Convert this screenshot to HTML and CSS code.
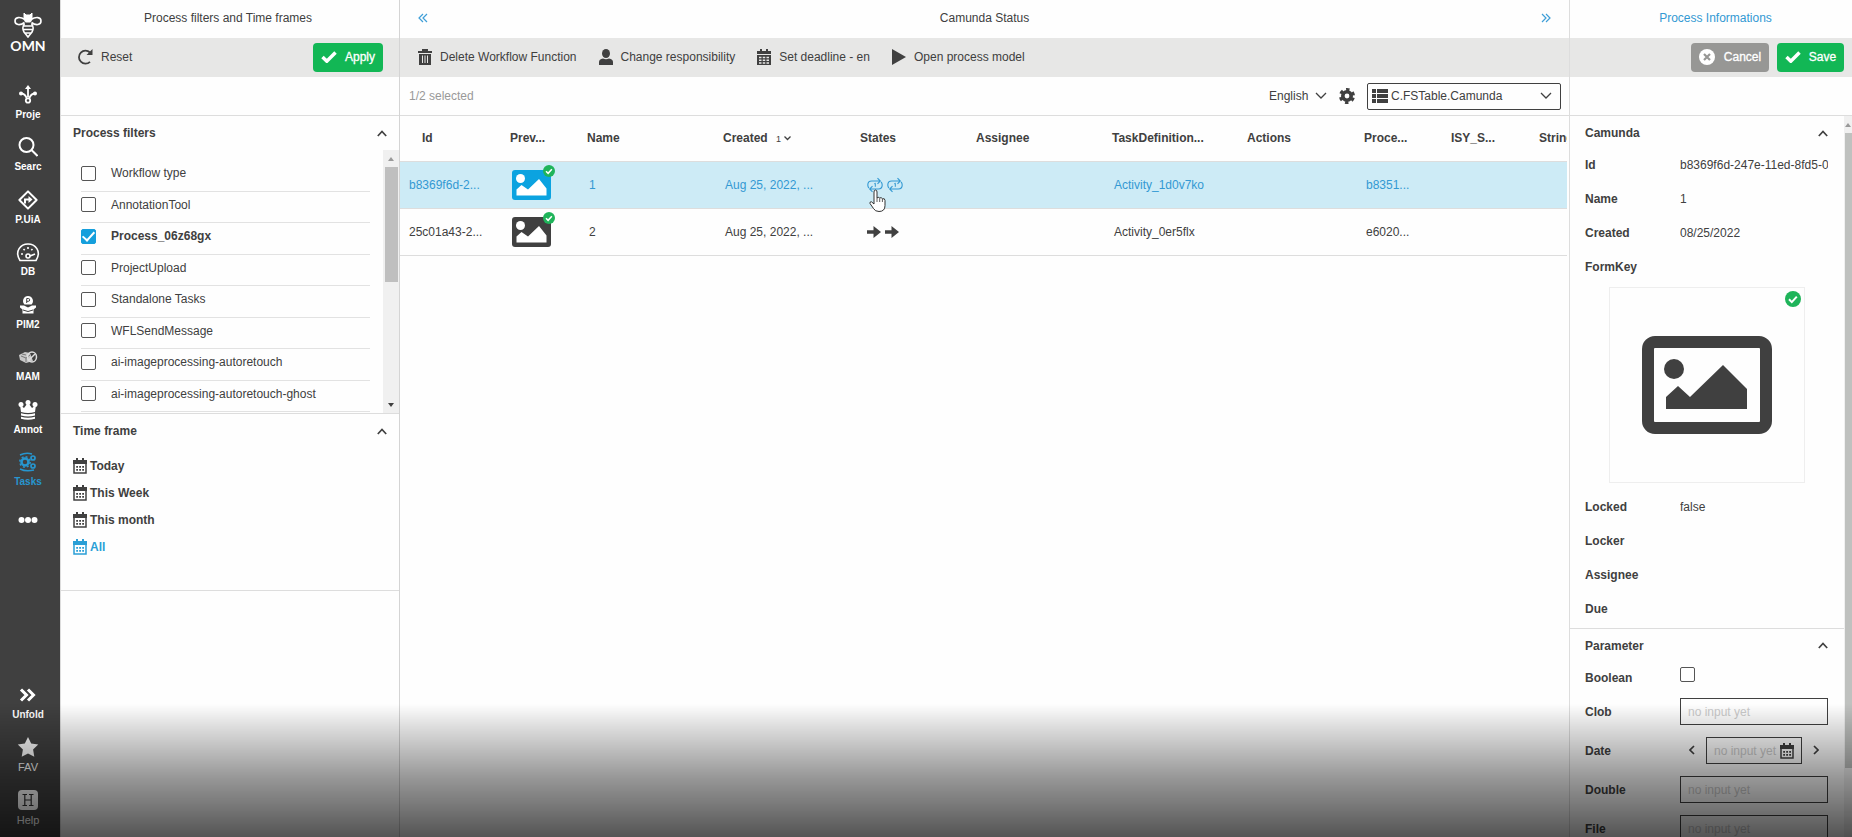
FILE: index.html
```html
<!DOCTYPE html>
<html lang="en">
<head>
    <meta charset="UTF-8">
    <meta name="viewport" content="width=device-width, initial-scale=1.0">
    <title>OMN - Camunda Status</title>
    <link rel="stylesheet" href="styles.css">
</head>
<body>
    <!-- shared icons -->
    <svg class="sprite" aria-hidden="true">
        <symbol id="check" viewBox="0 0 16 12"><path d="M1.500 6l4.300 4.200L14.500 1.500" fill="none" stroke="currentColor" stroke-width="3.500"/></symbol>
        <symbol id="up" viewBox="0 0 10 7"><path d="M.8 6L5 1.500 9.200 6" fill="none" stroke="currentColor" stroke-width="1.700"/></symbol>
        <symbol id="calendar" viewBox="0 0 14 16">
            <path d="M1 3h12v12H1z" fill="none" stroke="currentColor" stroke-width="1.500"/>
            <path d="M0 2h14v4H0zM3 0h2v3H3zM9 0h2v3H9z" fill="currentColor"/>
            <path d="M3.200 8.800h7.800M3.200 11.800h7.800" stroke="currentColor" stroke-width="1.800" stroke-dasharray="1.800 1.200"/>
        </symbol>
        <symbol id="badge" viewBox="0 0 16 16"><circle cx="8" cy="8" r="8" fill="#1fb45a"/><path d="M4 8.300l2.800 2.800 5-5.500" fill="none" stroke="#fff" stroke-width="2"/></symbol>
        <symbol id="image" viewBox="0 0 39 30">
            <rect width="39" height="30" rx="3" fill="currentColor"/>
            <circle cx="8.500" cy="8.500" r="4.500" fill="#fff"/>
            <path d="M4.500 25.500v-6l5-4.500 6.500 4.500L27 9l7.500 9.500v7z" fill="#fff"/>
        </symbol>
        <symbol id="loop" viewBox="0 0 16 16">
            <path d="M2 11Q.8 10 .8 8 .8 4 4.800 4H13M10.500 1.200L13.300 4l-2.800 2.800M14 5q1.200 1 1.200 3 0 4-4 4H3M5.500 9.200L2.700 12l2.800 2.800" fill="none" stroke="currentColor" stroke-width="1.100"/>
            <path d="M7.300 6.800l1-.6v3.600" fill="none" stroke="currentColor"/>
        </symbol>
        <symbol id="arrow" viewBox="0 0 14 12"><path d="M0 4.200h6.500V0L14 6l-7.500 6V7.800H0z" fill="currentColor"/></symbol>
    </svg>

    <div class="app">
        <nav class="sidebar">
            <div class="logo">
                <svg width="28" height="26" viewBox="0 0 28 26" fill="none" stroke="#fff" stroke-width="1.600">
                    <path d="M11 7.500C6 4.500 1 5 1 9s5 5 9.500 1.500M17 7.500C22 4.500 27 5 27 9s-5 5-9.500 1.500"/>
                    <path d="M10 1l2 2h4l2-2v6l-1.500 3h-5L10 7z" fill="#fff" stroke-width="1"/>
                    <path d="M9.500 14h9M9.500 17.500h9M11 21h6M10.500 11.500q-3 4-.5 8.500l4 5 4-5q2.500-4.500-.5-8.500"/>
                </svg>
                <span>OMN</span>
            </div>
            <ul class="menu">
                <li><a href="#">
                    <svg width="20" height="20" viewBox="0 0 20 20" fill="none" stroke="currentColor" stroke-width="1.800"><path d="M10 3v9M3 8.500c4 0 4.500 2.500 6 5M17 8.500c-4 0-4.500 2.500-6 5"/><circle cx="10" cy="15.500" r="2.200"/><path d="M10 0l3 4H7z" fill="currentColor" stroke="none"/><circle cx="3" cy="8.500" r="2" fill="currentColor" stroke="none"/><circle cx="17" cy="8.500" r="2" fill="currentColor" stroke="none"/></svg>
                    Proje</a></li>
                <li><a href="#">
                    <svg width="20" height="20" viewBox="0 0 20 20" fill="none" stroke="currentColor" stroke-width="2"><circle cx="8.500" cy="8" r="7"/><path d="M13.500 13l6 6"/></svg>
                    Searc</a></li>
                <li><a href="#">
                    <svg width="20" height="20" viewBox="0 0 20 20" fill="none" stroke="currentColor" stroke-width="2"><path d="M10 1.400L18.600 10 10 18.600 1.400 10z" stroke-linejoin="round"/><path d="M7 13.500V9.500h4"/><path d="M10.500 6l4 3.500-4 3.500z" fill="currentColor" stroke="none"/></svg>
                    P.UiA</a></li>
                <li><a href="#">
                    <svg width="24" height="20" viewBox="0 0 24 20" fill="none" stroke="currentColor" stroke-width="1.600"><path d="M4 18.500C-2 9 5 2 12 2s14 7 8 16.500zM14 14l5-2"/><circle cx="12" cy="14" r="2"/><path d="M5 12h2M7.500 7l1.200 1.200M12 5v2M16.500 7l-1.200 1.200"/></svg>
                    DB</a></li>
                <li><a href="#">
                    <svg width="20" height="20" viewBox="0 0 20 20" fill="currentColor"><path d="M10 1a5 5 0 0 1 3.500 8.500h-7A5 5 0 0 1 10 1zM2 10.500l4 0 4 2 4-2h4v2l-2.500 2v4h-11v-4L2 12.500z"/><path d="M8.700 8V3.500h1.600a1.400 1.400 0 0 1 0 2.800H9M5 15l5 1.500 5-1.500" fill="none" stroke="#404040" stroke-width="1"/></svg>
                    PIM2</a></li>
                <li><a href="#">
                    <svg width="20" height="20" viewBox="0 0 20 20"><path d="M1 8l6-3 5 1 3 8-7 2-6-3z" fill="#c8c8c8"/><path d="M3 9l5 2 4-3M8 11v4M4 7l4 1" stroke="#777" fill="none"/><ellipse cx="14" cy="10" rx="4.500" ry="5" fill="none" stroke="#ddd" stroke-width="1.500"/><path d="M11 13l6-6" stroke="#ddd" stroke-width="1.500"/></svg>
                    MAM</a></li>
                <li><a href="#">
                    <svg width="20" height="20" viewBox="0 0 20 20" fill="currentColor"><circle cx="10" cy="2.500" r="2.500"/><circle cx="3" cy="4.500" r="2.500"/><circle cx="17" cy="4.500" r="2.500"/><path d="M2 5l4 3 3-4h2l3 4 4-3-1 7q-7 2-14 0zM3 13.200q7 2 14 0v2.300q-7 2-14 0zM3 16.700q7 2 14 0v2q-7 2-14 0z"/></svg>
                    Annot</a></li>
                <li><a href="#" class="active">
                    <svg width="20" height="20" viewBox="0 0 20 20" fill="none" stroke="currentColor"><circle cx="7" cy="10" r="3.500" stroke-width="2.500"/><circle cx="7" cy="10" r="5.200" stroke-width="1.500" stroke-dasharray="2 2.080"/><circle cx="15" cy="6" r="2" stroke-width="1.700"/><circle cx="15" cy="14" r="2" stroke-width="1.700"/><path d="M2 3q6-3 12-1M2 17q6 3 14 1" stroke-width="1.500"/></svg>
                    Tasks</a></li>
                <li><a href="#" class="more" aria-label="More">
                    <svg width="20" height="20" viewBox="0 0 20 20" fill="currentColor"><circle cx="3.500" cy="10" r="3"/><circle cx="10" cy="10" r="3"/><circle cx="16.500" cy="10" r="3"/></svg></a></li>
            </ul>
            <ul class="menu menu-bottom">
                <li><a href="#">
                    <svg width="20" height="20" viewBox="0 0 20 20" fill="none" stroke="currentColor" stroke-width="3"><path d="M3 4.500L8.500 10 3 15.500M10 4.500l5.500 5.500-5.500 5.500"/></svg>
                    Unfold</a></li>
                <li><a href="#">
                    <svg width="22" height="20" viewBox="0 0 22 20" fill="currentColor"><path d="M11 0l3.200 6.500 7 1-5.100 5 1.200 7.200L11 16.500l-6.300 3.200 1.200-7.200-5.100-5 7-1z"/></svg>
                    <span>FAV</span></a></li>
                <li><a href="#">
                    <svg width="20" height="20" viewBox="0 0 20 20"><rect width="20" height="20" rx="4" fill="currentColor"/><path d="M4.500 4.500h4.500M11 4.500h4.500M4.500 15.500h4.500M11 15.500h4.500M6.800 4.500v11M13.200 4.500v11M7 10h6" stroke="#333" stroke-width="1.200"/></svg>
                    <span>Help</span></a></li>
            </ul>
        </nav>

        <section class="panel filters">
            <header class="title">Process filters and Time frames</header>
            <div class="toolbar">
                <button class="tool">
                    <svg width="16" height="16" viewBox="0 0 16 16"><path d="M13 3.500A6.500 6.500 0 1 0 13 12.800" fill="none" stroke="currentColor" stroke-width="1.800"/><path d="M15.500 0v6h-6z" fill="currentColor"/></svg>
                    Reset
                </button>
                <button class="btn green"><svg width="16" height="12"><use href="#check"/></svg>Apply</button>
            </div>
            <div class="subbar"></div>

            <div class="section-head"><h2>Process filters</h2><svg width="10" height="7"><use href="#up"/></svg></div>
            <div class="filter-box">
                <ul class="filter-list">
                    <li><label><input type="checkbox">Workflow type</label></li>
                    <li><label><input type="checkbox">AnnotationTool</label></li>
                    <li><label><input type="checkbox" checked><b>Process_06z68gx</b></label></li>
                    <li><label><input type="checkbox">ProjectUpload</label></li>
                    <li><label><input type="checkbox">Standalone Tasks</label></li>
                    <li><label><input type="checkbox">WFLSendMessage</label></li>
                    <li><label><input type="checkbox">ai-imageprocessing-autoretouch</label></li>
                    <li><label><input type="checkbox">ai-imageprocessing-autoretouch-ghost</label></li>
                </ul>
                <div class="scrollbar">
                    <i class="tri-up"></i>
                    <div class="thumb"></div>
                    <i class="tri-down"></i>
                </div>
            </div>

            <div class="section-head"><h2>Time frame</h2><svg width="10" height="7"><use href="#up"/></svg></div>
            <ul class="frames">
                <li><a href="#"><svg width="14" height="16"><use href="#calendar"/></svg>Today</a></li>
                <li><a href="#"><svg width="14" height="16"><use href="#calendar"/></svg>This Week</a></li>
                <li><a href="#"><svg width="14" height="16"><use href="#calendar"/></svg>This month</a></li>
                <li><a href="#" class="active"><svg width="14" height="16"><use href="#calendar"/></svg>All</a></li>
            </ul>
        </section>

        <main class="panel status">
            <header class="title">
                <a href="#" aria-label="Collapse left"><svg width="10" height="10" viewBox="0 0 10 10" fill="none" stroke="currentColor" stroke-width="1.200"><path d="M5 1L1 5l4 4M9 1L5 5l4 4"/></svg></a>
                <span>Camunda Status</span>
                <a href="#" aria-label="Collapse right"><svg width="10" height="10" viewBox="0 0 10 10" fill="none" stroke="currentColor" stroke-width="1.200"><path d="M1 1l4 4-4 4M5 1l4 4-4 4"/></svg></a>
            </header>
            <div class="toolbar">
                <button class="tool">
                    <svg width="14" height="16" viewBox="0 0 14 16" fill="currentColor"><path d="M0 2h4V0h6v2h4v2H0zM1 5h12v11H1z"/><path d="M4.500 6.500v7.500M7 6.500v7.500M9.500 6.500v7.500" stroke="#e7e7e6"/></svg>
                    Delete Workflow Function
                </button>
                <button class="tool">
                    <svg width="14" height="16" viewBox="0 0 14 16" fill="currentColor"><ellipse cx="7" cy="4.500" rx="4" ry="4.500"/><path d="M0 16v-3q0-3 4-3.500 3 1.500 6 0 4 .5 4 3.500v3z"/></svg>
                    Change responsibility
                </button>
                <button class="tool">
                    <svg width="14" height="16" viewBox="0 0 14 16" fill="currentColor"><path d="M0 2h14v3H0zM3 0h2v3H3zM9 0h2v3H9zM0 6h14v10H0z"/><path d="M2 8.500h10M2 11.200h10M2 13.900h10" stroke="#e7e7e6" stroke-width="1.500" stroke-dasharray="2.500 1.250"/></svg>
                    Set deadline - en
                </button>
                <button class="tool">
                    <svg width="14" height="16" viewBox="0 0 14 16" fill="currentColor"><path d="M0 0l14 8-14 8z"/></svg>
                    Open process model
                </button>
            </div>
            <div class="subbar">
                <span class="count">1/2 selected</span>
                <span class="select language">
                    <select aria-label="Language"><option>English</option></select>
                    <svg width="12" height="8" viewBox="0 0 12 8"><path d="M1 1l5 5 5-5" fill="none" stroke="currentColor" stroke-width="1.300"/></svg>
                </span>
                <button class="gear" aria-label="Settings">
                    <svg width="16" height="16" viewBox="0 0 16 16"><circle cx="8" cy="8" r="4.200" fill="none" stroke="currentColor" stroke-width="3.600"/><circle cx="8" cy="8" r="6.500" fill="none" stroke="currentColor" stroke-width="3" stroke-dasharray="3.400 3.407" stroke-dashoffset="-1.700"/></svg>
                </button>
                <span class="select view">
                    <svg width="16" height="14" viewBox="0 0 16 14" fill="currentColor"><path d="M0 0h4v4H0zM5 0h11v4H5zM0 5h4v4H0zM5 5h11v4H5zM0 10h4v4H0zM5 10h11v4H5z"/></svg>
                    <select aria-label="View"><option>C.FSTable.Camunda</option></select>
                    <svg width="12" height="8" viewBox="0 0 12 8"><path d="M1 1l5 5 5-5" fill="none" stroke="currentColor" stroke-width="1.300"/></svg>
                </span>
            </div>

            <table>
                <colgroup>
                    <col class="w-id"><col class="w-preview"><col class="w-name"><col class="w-created"><col class="w-states"><col class="w-assignee"><col class="w-task"><col class="w-actions"><col class="w-process"><col class="w-isy"><col>
                </colgroup>
                <thead>
                    <tr>
                        <th>Id</th>
                        <th>Prev...</th>
                        <th>Name</th>
                        <th>Created <small>1</small><svg width="7" height="5" viewBox="0 0 7 5"><path d="M.5 .5l3 3 3-3" fill="none" stroke="currentColor" stroke-width="1.300"/></svg></th>
                        <th>States</th>
                        <th>Assignee</th>
                        <th>TaskDefinition...</th>
                        <th>Actions</th>
                        <th>Proce...</th>
                        <th>ISY_S...</th>
                        <th>String</th>
                    </tr>
                </thead>
                <tbody>
                    <tr class="selected">
                        <td>b8369f6d-2...</td>
                        <td><span class="preview"><svg width="39" height="30"><use href="#image"/></svg><svg class="badge" width="12" height="12"><use href="#badge"/></svg></span></td>
                        <td>1</td>
                        <td>Aug 25, 2022, ...</td>
                        <td>
                            <span class="states">
                                <svg width="16" height="16"><use href="#loop"/></svg>
                                <svg width="16" height="16"><use href="#loop"/></svg>
                                <svg class="cursor" width="18" height="24" viewBox="0 0 18 24"><path d="M5 15V3q0-2 1.500-2T8 3v6q1-1.500 2.700 0 1.500-1 2.700.7 2.600-.6 2.600 1.800v5q0 6-6 6-4 0-5.500-3L1 14.500q-.5-2 1.500-1.700z" fill="#fff" stroke="#333"/><path d="M8 9v4M10.700 9.500V13M13.400 10v3" stroke="#333" stroke-width=".8"/></svg>
                            </span>
                        </td>
                        <td></td>
                        <td>Activity_1d0v7ko</td>
                        <td></td>
                        <td>b8351...</td>
                        <td></td>
                        <td></td>
                    </tr>
                    <tr>
                        <td>25c01a43-2...</td>
                        <td><span class="preview"><svg width="39" height="30"><use href="#image"/></svg><svg class="badge" width="12" height="12"><use href="#badge"/></svg></span></td>
                        <td>2</td>
                        <td>Aug 25, 2022, ...</td>
                        <td>
                            <span class="states">
                                <svg width="14" height="12"><use href="#arrow"/></svg>
                                <svg width="14" height="12"><use href="#arrow"/></svg>
                            </span>
                        </td>
                        <td></td>
                        <td>Activity_0er5flx</td>
                        <td></td>
                        <td>e6020...</td>
                        <td></td>
                        <td></td>
                    </tr>
                </tbody>
            </table>
        </main>

        <aside class="panel info">
            <header class="title">Process Informations</header>
            <div class="toolbar">
                <button class="btn gray"><svg width="16" height="16" viewBox="0 0 16 16"><circle cx="8" cy="8" r="8" fill="#fff"/><path d="M5 5l6 6M11 5l-6 6" stroke="#979795" stroke-width="2.200"/></svg>Cancel</button>
                <button class="btn green"><svg width="16" height="12"><use href="#check"/></svg>Save</button>
            </div>
            <div class="subbar"></div>
            <div class="info-body">
                <div class="info-content">
                    <div class="section-head"><h2>Camunda</h2><svg width="10" height="7"><use href="#up"/></svg></div>
                    <dl>
                        <dt>Id</dt><dd>b8369f6d-247e-11ed-8fd5-02</dd>
                        <dt>Name</dt><dd>1</dd>
                        <dt>Created</dt><dd>08/25/2022</dd>
                        <dt>FormKey</dt><dd></dd>
                    </dl>
                    <div class="picture">
                        <svg width="130" height="98" viewBox="0 0 130 98"><rect x="6" y="6" width="118" height="86" rx="7" fill="none" stroke="#404040" stroke-width="12"/><circle cx="32" cy="33" r="10" fill="#404040"/><path d="M24 73V61l12-11 12 11 33-32 24 24v20z" fill="#404040"/></svg>
                        <svg class="badge" width="16" height="16"><use href="#badge"/></svg>
                    </div>
                    <dl>
                        <dt>Locked</dt><dd>false</dd>
                        <dt>Locker</dt><dd></dd>
                        <dt>Assignee</dt><dd></dd>
                        <dt>Due</dt><dd></dd>
                    </dl>
                    <div class="section-head parameter"><h2>Parameter</h2><svg width="10" height="7"><use href="#up"/></svg></div>
                    <form>
                        <div class="field short"><label for="boolean">Boolean</label><input id="boolean" type="checkbox"></div>
                        <div class="field"><label for="clob">Clob</label><input id="clob" type="text" placeholder="no input yet"></div>
                        <div class="field">
                            <label for="date">Date</label>
                            <div class="date">
                                <button type="button" aria-label="Previous day"><svg width="6" height="10" viewBox="0 0 6 10"><path d="M5 1L1 5l4 4" fill="none" stroke="currentColor" stroke-width="1.700"/></svg></button>
                                <span class="date-box"><input id="date" type="text" placeholder="no input yet"><svg width="14" height="16"><use href="#calendar"/></svg></span>
                                <button type="button" aria-label="Next day"><svg width="6" height="10" viewBox="0 0 6 10"><path d="M1 1l4 4-4 4" fill="none" stroke="currentColor" stroke-width="1.700"/></svg></button>
                            </div>
                        </div>
                        <div class="field"><label for="double">Double</label><input id="double" type="text" placeholder="no input yet"></div>
                        <div class="field"><label for="file">File</label><input id="file" type="text" placeholder="no input yet"></div>
                    </form>
                </div>
                <div class="scrollbar">
                    <i class="tri-up"></i>
                    <div class="thumb"></div>
                </div>
            </div>
        </aside>
    </div>
    <div class="fade"></div>
</body>
</html>
```
FILE: styles.css
```css
* {
    box-sizing: border-box;
}

body {
    margin: 0;
    background: #fefefe;
    color: #404040;
    font: 12px/16px "Liberation Sans", Arial, sans-serif;
}

ul, dl, dd, h2 {
    margin: 0;
    padding: 0;
    list-style: none;
}

a {
    color: inherit;
    text-decoration: none;
}

button, input, select {
    font: inherit;
    color: inherit;
}

button {
    border: 0;
    padding: 0;
    background: none;
}

svg {
    flex: none;
}

.sprite {
    display: none;
}

.app {
    display: grid;
    grid-template-columns: 60px 340px 1fr 283px;
    height: 100vh;
    overflow: hidden;
}

/* sidebar */
.sidebar {
    display: flex;
    flex-direction: column;
    background: #404040;
    color: #fff;
    padding-right: 4px;
}

.logo {
    display: flex;
    flex-direction: column;
    align-items: center;
    flex: none;
    padding-top: 12px;
    height: 77px;
    font: bold 14px/16px Lato, sans-serif;
}

.menu {
    display: flex;
    flex-direction: column;
    flex: none;
    height: 472px;
}

.menu li {
    flex: 1;
    padding-top: 8px;
}

.menu a {
    display: flex;
    flex-direction: column;
    align-items: center;
    gap: 4px;
    font-size: 10px;
    line-height: 12px;
    font-weight: bold;
}

.menu .active {
    color: #2796cf;
}

.menu .more {
    padding-top: 5px;
}

.menu span {
    font-size: 11px;
    font-weight: normal;
}

.menu-bottom {
    height: 157px;
    margin-top: auto;
    margin-bottom: 3px;
}

/* panels */
.panel {
    display: flex;
    flex-direction: column;
    min-width: 0;
    min-height: 0;
}

.title {
    display: flex;
    align-items: center;
    justify-content: center;
    flex: none;
    height: 38px;
    padding-bottom: 2px;
}

.toolbar {
    display: flex;
    align-items: center;
    flex: none;
    height: 39px;
    padding: 0 16px 1px;
    background: #e7e7e6;
}

.subbar {
    display: flex;
    align-items: center;
    flex: none;
    height: 39px;
    border-bottom: 1px solid #ddd;
}

.tool {
    display: flex;
    align-items: center;
    gap: 8px;
}

.btn {
    display: flex;
    align-items: center;
    justify-content: center;
    gap: 8px;
    height: 29px;
    padding: 0 8px;
    border-radius: 4px;
    color: #fff;
    -webkit-text-stroke: 0.3px #fff;
}

.green {
    background: #12b755;
}

.gray {
    background: #979795;
}

.section-head {
    display: flex;
    align-items: center;
    justify-content: space-between;
    flex: none;
    height: 34px;
    padding: 0 12px;
}

h2 {
    font-size: 12px;
}

.scrollbar {
    display: flex;
    flex-direction: column;
    align-items: center;
    flex: none;
    width: 16px;
    padding: 7px 0 6px;
    background: #f0f0f0;
}

.thumb {
    width: 13px;
    background: #bfbfbf;
}

.tri-up, .tri-down {
    border: 3px solid transparent;
}

.tri-up {
    border-top: 0;
    border-bottom: 4px solid #999;
    margin-bottom: 6px;
}

.tri-down {
    border-bottom: 0;
    border-top: 4px solid #404040;
    margin-top: auto;
}

input[type="checkbox"] {
    appearance: none;
    width: 15px;
    height: 15px;
    margin: 0;
    border: 1px solid #555;
    border-radius: 2px;
    flex: none;
}

input[type="checkbox"]:checked {
    display: grid;
    place-items: center;
    border-color: #159fdc;
    background: #159fdc;
}

input[type="checkbox"]:checked::before {
    content: "";
    width: 5px;
    height: 10px;
    border: solid #fff;
    border-width: 0 2px 2px 0;
    transform: translateY(-1px) rotate(42deg);
}

/* left panel */
.filters {
    border-left: 1px solid #ddd;
    border-right: 1px solid #d4d4d4;
}

.filters .title {
    padding-right: 4px;
}

.filters .toolbar {
    justify-content: space-between;
}

.filters .btn {
    width: 70px;
}

.filter-box {
    display: flex;
    justify-content: space-between;
    flex: none;
    height: 264px;
    border-bottom: 1px solid #ddd;
}

.filter-list {
    display: flex;
    flex-direction: column;
    width: 289px;
    height: 252px;
    margin: 10px 0 0 20px;
}

.filter-list li {
    display: flex;
    align-items: center;
    flex: 1;
    padding-bottom: 4px;
    border-bottom: 1px solid #e2e2e2;
}

.filter-list label {
    display: flex;
    align-items: center;
    gap: 15px;
}

.filter-box .thumb {
    height: 115px;
}

.frames {
    display: flex;
    flex-direction: column;
    height: 143px;
    padding: 5px 12px 0;
    border-bottom: 1px solid #ddd;
}

.frames li {
    height: 27px;
    padding-top: 5px;
}

.frames a {
    display: flex;
    align-items: center;
    gap: 3px;
    font-weight: bold;
}

.frames .active {
    color: #2a9fd6;
}

/* center panel */
.status .title {
    justify-content: space-between;
    padding: 0 18px 2px;
}

.status .title a {
    display: flex;
    color: #3f9fd8;
}

.status .toolbar {
    gap: 22px;
    padding: 0 18px 1px;
}

.status .subbar {
    padding: 0 8px 0 9px;
}

.count {
    margin-right: auto;
    color: #999;
}

.select {
    display: flex;
    align-items: center;
}

.select select {
    appearance: none;
    border: 0;
    padding: 0;
    background: none;
    outline: 0;
}

.language {
    gap: 6px;
}

.gear {
    display: flex;
    margin: 0 12px;
}

.view {
    gap: 3px;
    width: 194px;
    height: 27px;
    padding: 0 8px 0 4px;
    border: 1px solid #404040;
    border-radius: 2px;
}

.view select {
    flex: 1;
}

table {
    width: calc(100% - 2px);
    table-layout: fixed;
    border-collapse: collapse;
}

.w-id { width: 98px; }
.w-preview { width: 77px; }
.w-name { width: 136px; }
.w-created { width: 137px; }
.w-states { width: 116px; }
.w-assignee { width: 136px; }
.w-task { width: 135px; }
.w-actions { width: 117px; }
.w-process { width: 87px; }
.w-isy { width: 88px; }

th, td {
    height: 47px;
    padding: 0 0 0 14px;
    border-bottom: 1px solid #ddd;
    text-align: left;
    white-space: nowrap;
}

th {
    height: 45px;
    padding-left: 12px;
    overflow: hidden;
}

th:first-child {
    padding-left: 22px;
}

td:first-child {
    padding-left: 9px;
}

th small {
    margin: 0 3px 0 5px;
    font-size: 9px;
    font-weight: normal;
}

th svg {
    vertical-align: middle;
}

.selected {
    background: #cdebf6;
    color: #3399d3;
}

.preview {
    position: relative;
    display: inline-flex;
    vertical-align: middle;
}

.selected .preview {
    color: #0ba3e0;
}

.preview .badge {
    position: absolute;
    top: -5px;
    right: -4px;
}

.states {
    position: relative;
    display: flex;
    align-items: center;
    gap: 4px;
    padding-left: 5px;
}

.cursor {
    position: absolute;
    top: 12px;
    left: 7px;
}

/* right panel */
.info {
    border-left: 1px solid #ddd;
}

.info .title {
    color: #3399d3;
    padding-left: 9px;
}

.info .toolbar {
    justify-content: flex-end;
    gap: 8px;
    padding: 0 8px 1px;
}

.info .gray {
    width: 78px;
    gap: 9px;
}

.info .green {
    width: 67px;
}

.info-body {
    display: flex;
    flex: 1;
    min-height: 0;
}

.info-content {
    flex: 1;
    min-width: 0;
    overflow: hidden;
}

.info-content .section-head {
    padding: 0 16px 0 15px;
}

.info-body .scrollbar {
    width: 8px;
}

.info-body .thumb {
    height: 635px;
    width: 7px;
    background: #bfc1bf;
}

dl {
    display: grid;
    grid-template-columns: 95px 1fr;
    grid-auto-rows: 34px;
    align-items: center;
    padding: 0 16px 0 15px;
    margin-top: -2px;
}

dt, .field label {
    font-weight: bold;
}

dd {
    overflow: hidden;
    white-space: nowrap;
}

.picture {
    position: relative;
    display: flex;
    align-items: center;
    justify-content: center;
    width: 196px;
    height: 196px;
    margin: 3px auto 9px;
    border: 1px solid #eee;
}

.picture .badge {
    position: absolute;
    top: 3px;
    right: 3px;
}

.parameter {
    border-top: 1px solid #ddd;
    margin-top: 2px;
}

form {
    padding: 0 16px 0 15px;
}

.field {
    display: grid;
    grid-template-columns: 95px 1fr;
    align-items: center;
    height: 39px;
}

.field.short {
    align-items: start;
    height: 30px;
    padding-top: 5px;
}

.short label {
    padding-top: 3px;
}

.field input[type="text"] {
    width: 100%;
    height: 27px;
    padding: 0 7px;
    border: 1px solid #404040;
    border-radius: 0;
    background: none;
    outline: 0;
}

.field input::placeholder {
    color: #ccc;
}

.date {
    display: flex;
    align-items: center;
    justify-content: space-between;
    padding: 0 9px;
}

.date-box {
    display: flex;
    align-items: center;
    width: 96px;
    height: 27px;
    padding-right: 7px;
    border: 1px solid #404040;
}

.date-box input[type="text"] {
    flex: 1;
    min-width: 0;
    border: 0;
    padding-right: 0;
}

/* darkening along the bottom of the window */
.fade {
    position: fixed;
    left: 0;
    right: 0;
    bottom: 0;
    height: 133px;
    background: linear-gradient(rgba(0, 0, 0, 0), rgba(0, 0, 0, 0.12) 16%, rgba(0, 0, 0, 0.4) 55%, rgba(0, 0, 0, 0.67));
    pointer-events: none;
}
```
